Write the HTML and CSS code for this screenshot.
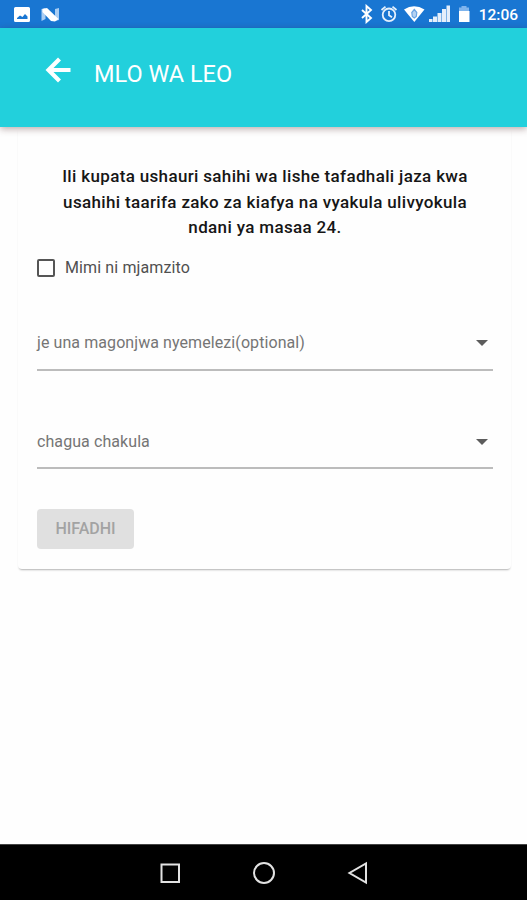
FILE: index.html
```html
<!DOCTYPE html>
<html lang="sw">
<head>
    <meta charset="UTF-8">
    <meta name="viewport" content="width=device-width, initial-scale=1.0">
    <title>Mlo wa leo</title>
    <link rel="stylesheet" href="styles.css">
</head>
<body>
    <div class="status-bar">
        <svg class="status-left" width="48" height="18" viewBox="0 0 48 18">
            <!-- picha -->
            <path fill="#fff" fill-rule="evenodd" d="M1.500 1h13a1.500 1.500 0 0 1 1.500 1.500v12a1.500 1.500 0 0 1-1.500 1.500h-13a1.500 1.500 0 0 1-1.500-1.500v-12A1.500 1.500 0 0 1 1.500 1zM3 13h10.500V10.500L11 8 8.500 11 6 9.500 3 12z"/>
            <path fill="#a9cdf3" d="M27.500 3l4-1v11l-4 2zM41 3l4-1v12l-4 1z"/>
            <path fill="#fff" d="M28.500 3l4.500-1 11.500 11-3.500 2.500-4-.5-8.500-9z"/>
        </svg>
        <div class="status-right">
            <svg width="111" height="20" viewBox="0 0 111 20">
                <!-- bluetooth -->
                <path fill="none" stroke="#fff" stroke-width="1.900" d="M2 6l9 8-4.500 4V2L11 6l-9 8"/>
                <!-- kengele -->
                <g fill="none" stroke="#e4f0fc" stroke-width="1.800">
                    <circle cx="29" cy="10.800" r="6.300"/>
                    <path d="M29 7v4.200l3 2M21.500 6L25.500 2.600M36.500 6L32.500 2.600"/>
                </g>
                <!-- wifi -->
                <path fill="#fff" d="M44 5.500Q54 -1 64.500 5.500L54.300 18z"/>
                <path fill="#b5d2f2" stroke="#6ba5e3" stroke-width="1.200" d="M54.300 5.500l2.500 3-.5 4-2 1.500-2-1.500-.5-4z"/>
                <!-- mtandao -->
                <path fill="#e4eefb" d="M69 15h3.500v3H69zM73 12.500h4V18h-4zM77.500 9h4v9h-4zM82 5h4v13h-4zM86.500 1.500h3.500V18h-3.500z"/>
                <!-- betri -->
                <path fill="#7eb4ed" d="M101.500 2h5v1.500h2.500V8H99V3.500h2.500z"/>
                <path fill="#fff" d="M99 7h10.500v11H99z"/>
            </svg>
            <span class="clock">12:06</span>
        </div>
    </div>

    <header class="app-bar">
        <svg class="back" width="26" height="26" viewBox="0 0 26 26">
            <path d="M25.500 13H4M14.500 2L3.500 13l11 11" fill="none" stroke="#fff" stroke-width="4.200"/>
        </svg>
        <h1>MLO WA LEO</h1>
    </header>

    <main class="content">
        <form class="card">
            <p class="intro">Ili kupata ushauri sahihi wa lishe tafadhali jaza kwa<br>usahihi taarifa zako za kiafya na vyakula ulivyokula<br>ndani ya masaa 24.</p>

            <label class="check">
                <span class="box"></span>
                <span>Mimi ni mjamzito</span>
            </label>

            <div class="select first">
                <span>je una magonjwa nyemelezi(optional)</span>
                <i class="caret"></i>
            </div>
            <div class="select second">
                <span>chagua chakula</span>
                <i class="caret"></i>
            </div>

            <button type="button" class="save" disabled>HIFADHI</button>
        </form>
    </main>

    <nav class="nav-bar">
        <svg width="24" height="24" viewBox="0 0 24 24"><rect x="3.500" y="3.500" width="17.500" height="17.500"/></svg>
        <svg width="24" height="24" viewBox="0 0 24 24"><circle cx="12" cy="12" r="10"/></svg>
        <svg width="24" height="24" viewBox="0 0 24 24"><path d="M20 2.500v19L3.500 12z"/></svg>
    </nav>
</body>
</html>
```
FILE: styles.css
```css
* {
    box-sizing: border-box;
}

body {
    margin: 0;
    height: 900px;
    display: flex;
    flex-direction: column;
    overflow: hidden;
    background: #fefefe;
    font-family: Roboto, sans-serif;
}

.status-bar {
    height: 28px;
    padding: 0 9px 0 14px;
    display: flex;
    align-items: center;
    justify-content: space-between;
    background: #1976d2;
    color: #fff;
}

.status-left {
    margin-top: 1px;
}

.status-right {
    display: flex;
    align-items: center;
    gap: 8px;
}

.clock {
    padding-top: 2px;
    font-size: 15.5px;
    font-weight: 500;
    line-height: 26px;
}

.app-bar {
    height: 99px;
    padding: 29px 45px;
    display: flex;
    align-items: flex-start;
    background: #22d0dc;
    color: #fff;
    box-shadow: 0 2px 7px rgba(60, 20, 20, 0.35);
}

.app-bar h1 {
    margin: 3px 0 0 23px;
    font-size: 23.5px;
    font-weight: 400;
    line-height: 28px;
}

.content {
    flex: 1;
    padding: 0 16px 0 18px;
}

.card {
    height: 442px;
    padding: 37px 18px 0 19px;
    border-radius: 4px;
    box-shadow: 0 2px 2px -1px rgba(0, 0, 0, 0.3);
}

.intro {
    margin: 0;
    font-size: 17px;
    font-weight: 500;
    line-height: 25.5px;
    letter-spacing: 0.34px;
    text-align: center;
    white-space: nowrap;
    color: #161616;
}

.check {
    height: 28px;
    margin-top: 13px;
    display: flex;
    align-items: center;
    gap: 10px;
    font-size: 16px;
    letter-spacing: 0.12px;
    color: #505050;
}

.box {
    width: 18px;
    height: 18px;
    border: 2px solid #555;
    border-radius: 2px;
}

.select {
    display: flex;
    justify-content: space-between;
    padding-right: 5px;
    border-bottom: 2px solid #bcbcbc;
    font-size: 16px;
    line-height: 20px;
    letter-spacing: 0.08px;
    color: #757575;
}

.first {
    height: 38px;
    margin-top: 51px;
}

.second {
    height: 37px;
    margin-top: 61px;
}

.caret {
    margin-top: 7px;
    width: 0;
    height: 0;
    border: 6px solid transparent;
    border-top-color: #5c5c5c;
    border-bottom: 0;
}

.save {
    display: block;
    width: 97px;
    height: 40px;
    margin-top: 40px;
    padding: 0;
    border: 0;
    border-radius: 4px;
    background: #e0e0e0;
    color: #a3a3a3;
    font: 500 16px Roboto, sans-serif;
}

.nav-bar {
    height: 56px;
    display: flex;
    align-items: center;
    justify-content: center;
    gap: 70px;
    background: #000;
    border-top: 1px solid #444;
}

.nav-bar svg {
    fill: none;
    stroke: #e2e2e2;
    stroke-width: 2;
}
```
